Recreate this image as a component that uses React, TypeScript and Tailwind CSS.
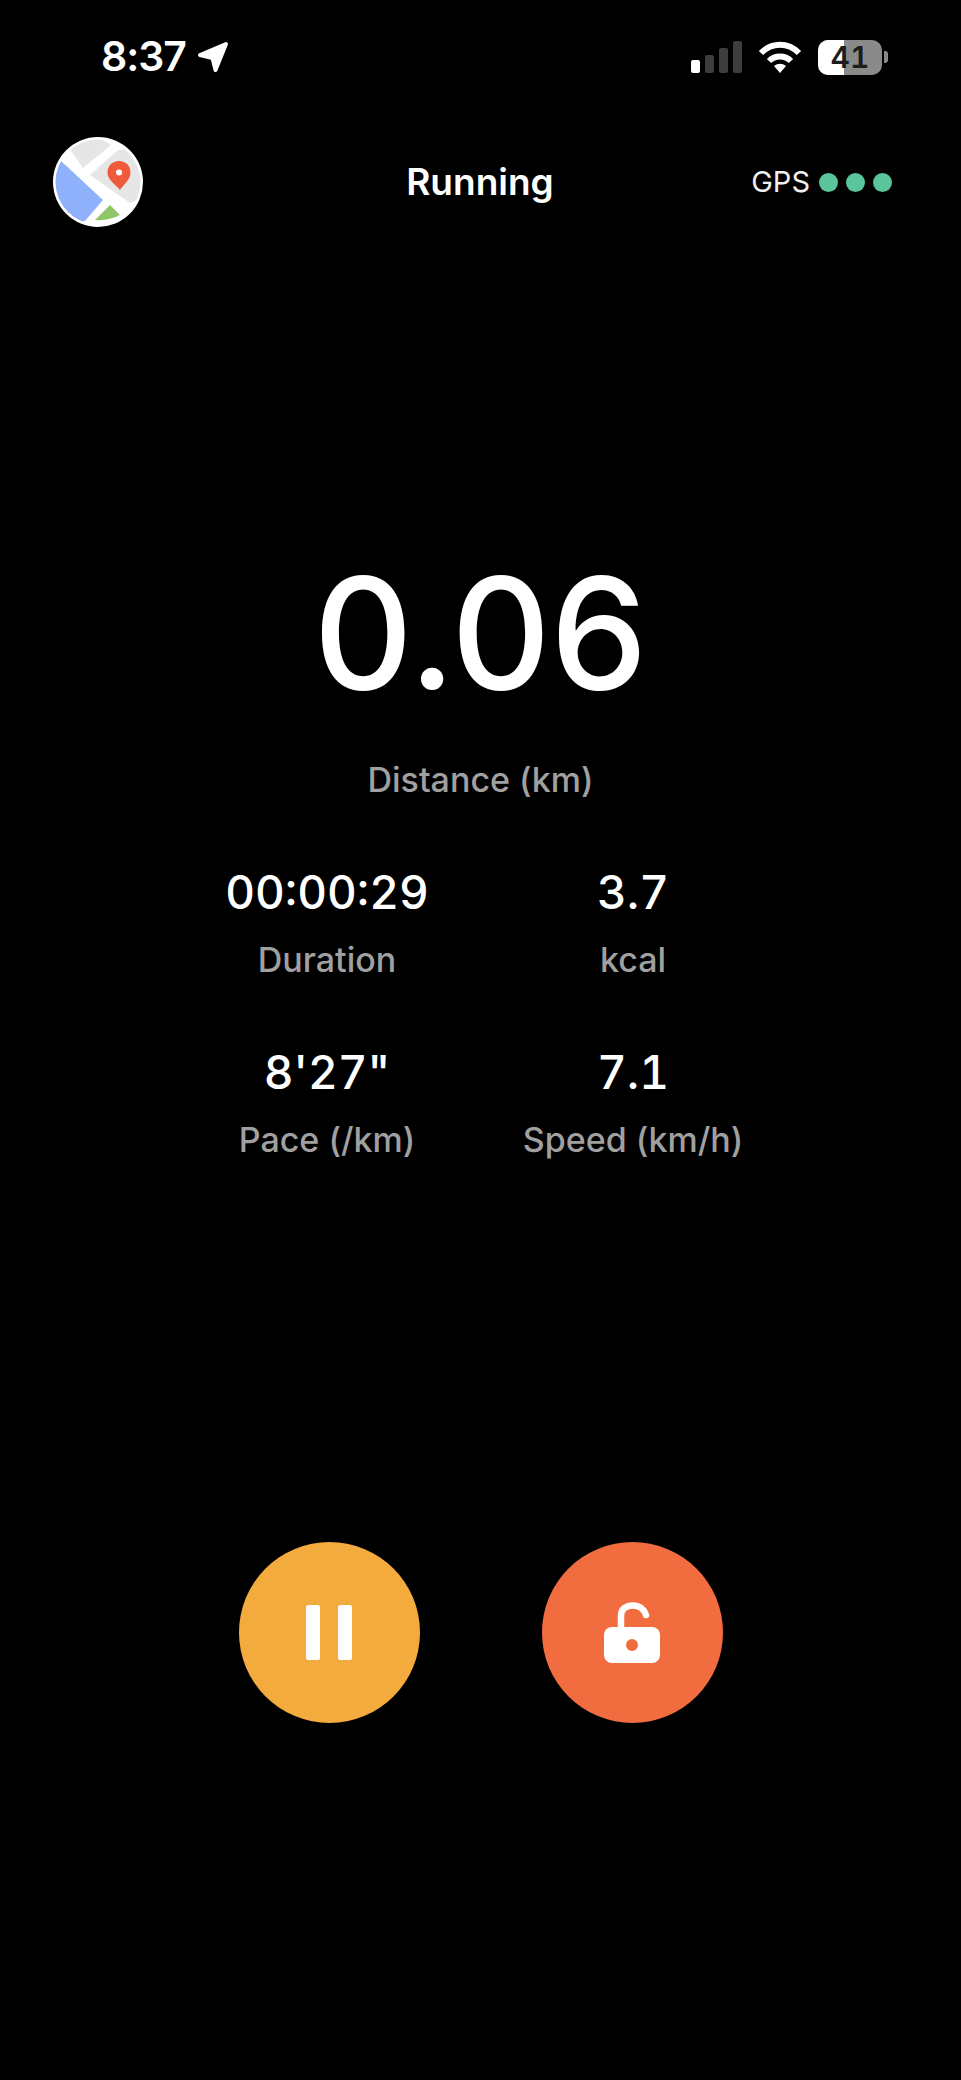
function Stat({ value, label }: { value: string; label: string }) {
  return (
    <div className="flex w-[240px] flex-col items-center">
      <div className="text-[46px] leading-[56px] font-[550] tabular-nums text-white">{value}</div>
      <div className="mt-[21px] text-[34px] leading-[38px] font-[450] text-[#a0a0a0]">{label}</div>
    </div>
  );
}

function MapLogo() {
  return (
    <svg width="90" height="90" viewBox="0 0 90 90" className="block">
      <defs>
        <clipPath id="mapClip">
          <circle cx="45" cy="45" r="42.5" />
        </clipPath>
      </defs>
      <circle cx="45" cy="45" r="45" fill="#ffffff" />
      <g clipPath="url(#mapClip)">
        <path d="M18 14 L30 31 L58 8 L45 0 L20 4 Z" fill="#e6e6e6" />
        <path d="M65 13 L37 38 L77 66 L92 60 L92 10 Z" fill="#e6e6e6" />
        <path d="M8 24 L50 63 L32 84 L0 90 L0 24 Z" fill="#8fb0fb" />
      </g>
      <path d="M57 68 L42 83 Q56 84 67 78 Z" fill="#8fc768" />
      <path d="M66 24 C59 24 54.500 29 54.500 35.500 C54.500 43 62 47 67 53 C71 47 77.500 43 77.500 35.500 C77.500 29 73 24 66 24 Z" fill="#ee5a3a" />
      <circle cx="66" cy="35.500" r="3" fill="#ffffff" />
    </svg>
  );
}

export default function App() {
  return (
    <div className="flex h-[2080px] w-[961px] flex-col bg-black font-['Inter','Liberation_Sans',sans-serif] text-white">
      <div className="flex h-[112px] items-center justify-between pt-[2px] pl-[101px] pr-[73px]">
        <div className="flex items-center gap-[11px]">
          <span className="text-[41px] font-semibold tracking-tight">8:37</span>
          <svg width="32" height="32" viewBox="0 0 32 32">
            <path d="M29 3 L3 14 L15.500 17 L18.500 29 Z" fill="#ffffff" stroke="#ffffff" strokeWidth="4" strokeLinejoin="round" />
          </svg>
        </div>
        <div className="flex items-center gap-[16px]">
          <div className="flex items-end gap-[5px]">
            <div className="h-[13px] w-[9px] rounded-[2px] bg-white" />
            <div className="h-[18px] w-[9px] rounded-[2px] bg-[#3d3d3d]" />
            <div className="h-[25px] w-[9px] rounded-[2px] bg-[#3d3d3d]" />
            <div className="h-[32px] w-[9px] rounded-[2px] bg-[#3d3d3d]" />
          </div>
          <svg width="44" height="32" viewBox="0 0 44 32">
            <path d="M3 12 C14 1 30 1 41 12" stroke="#fff" strokeWidth="6" fill="none" />
            <path d="M11 20 C17 14 27 14 33 20" stroke="#fff" strokeWidth="6" fill="none" />
            <path d="M16 25 L22 32 L28 25 C24 22 20 22 16 25 Z" fill="#fff" />
          </svg>
          <div className="flex items-center gap-[2px]">
            <div className="relative flex h-[35px] w-[64px] items-center justify-center overflow-hidden rounded-[10px] bg-[#8a8a8a]">
              <div className="absolute top-0 bottom-0 left-0 w-[26px] bg-white" />
              <span className="relative text-[30px] font-semibold tabular-nums text-[#1c1c1c]">41</span>
            </div>
            <div className="h-[12px] w-[4px] rounded-r-[3px] bg-[#8a8a8a]" />
          </div>
        </div>
      </div>

      <div className="flex h-[140px] items-center pl-[53px] pr-[69px]">
        <div className="flex-1">
          <MapLogo />
        </div>
        <div className="ml-[15px] text-[37px] font-semibold">Running</div>
        <div className="flex flex-1 items-center justify-end gap-[9px]">
          <span className="text-[29px] text-[#f0f0f0]">GPS</span>
          <div className="flex gap-[8px]">
            <div className="h-[19px] w-[19px] rounded-full bg-[#5ac59b]" />
            <div className="h-[19px] w-[19px] rounded-full bg-[#5ac59b]" />
            <div className="h-[19px] w-[19px] rounded-full bg-[#5ac59b]" />
          </div>
        </div>
      </div>

      <div className="mt-[301px] flex flex-col items-center">
        <div className="text-[154px] leading-[160px] font-[550]">0.06</div>
        <div className="mt-[48px] text-[34px] leading-[38px] font-[450] text-[#a0a0a0]">Distance (km)</div>
      </div>

      <div className="mt-[65px] ml-[207px] grid w-[546px] grid-cols-[240px_240px] gap-x-[66px] gap-y-[65px]">
        <Stat value="00:00:29" label="Duration" />
        <Stat value="3.7" label="kcal" />
        <Stat value={"8'27\""} label="Pace (/km)" />
        <Stat value="7.1" label="Speed (km/h)" />
      </div>

      <div className="mt-[383px] flex justify-center gap-[122px]">
        <div className="flex h-[181px] w-[181px] items-center justify-center gap-[18px] rounded-full bg-[#f4ab3d]">
          <div className="h-[55px] w-[14px] rounded-[2px] bg-white" />
          <div className="h-[55px] w-[14px] rounded-[2px] bg-white" />
        </div>
        <div className="flex h-[181px] w-[181px] items-center justify-center rounded-full bg-[#f16d40]">
          <svg width="58" height="62" viewBox="0 0 58 62">
            <path d="M18 27 V14 C18 7 23 3.500 30 3.500 C36 3.500 41 7 43 13" stroke="#fff" strokeWidth="6.500" strokeLinecap="round" fill="none" />
            <rect x="1" y="25" width="56" height="36" rx="8" fill="#fff" />
            <circle cx="29" cy="43" r="6" fill="#f16d40" />
          </svg>
        </div>
      </div>
    </div>
  );
}
